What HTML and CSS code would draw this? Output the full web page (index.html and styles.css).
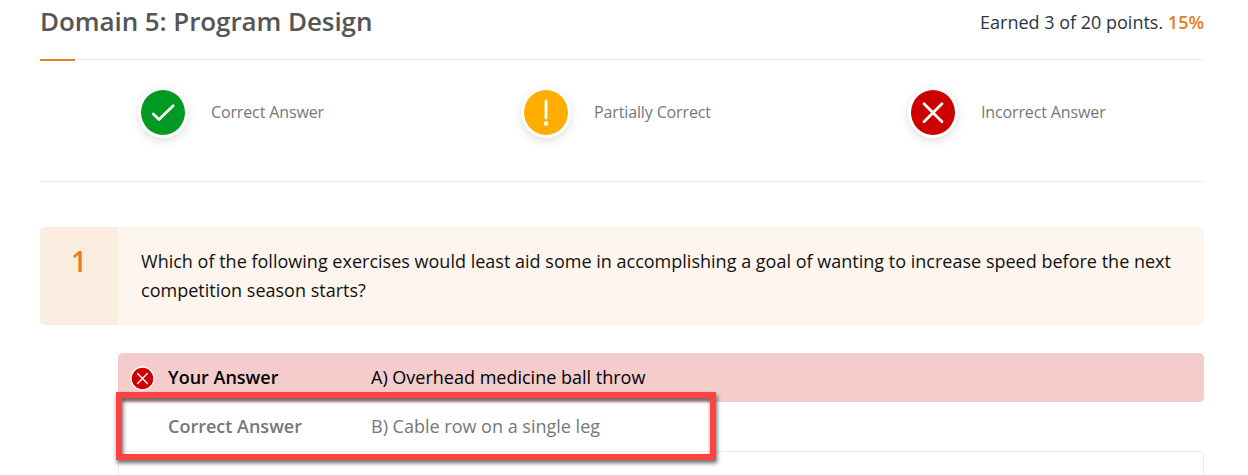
FILE: index.html
```html
<!DOCTYPE html>
<html lang="en">
<head>
<meta charset="utf-8">
<title>Domain 5: Program Design</title>
<link rel="stylesheet" href="styles.css">
</head>
<body>
<main class="page">
  <header class="head">
    <h1 class="title">Domain 5: Program Design</h1>
    <p class="score">Earned 3 of 20 points. <strong class="percent">15%</strong></p>
  </header>
  <section class="legend">
    <div class="legend-item">
      <span class="badge correct"><svg viewBox="0 0 44 44"><path d="M12.3 23.5L18 29.1L32.2 15.3"/></svg></span>
      <span class="label-correct">Correct Answer</span>
    </div>
    <div class="legend-item">
      <span class="badge partial"><svg viewBox="0 0 44 44"><path d="M22 10.3V27.6" /><circle cx="22" cy="33" r="2.3"/></svg></span>
      <span class="label-partial">Partially Correct</span>
    </div>
    <div class="legend-item">
      <span class="badge incorrect"><svg viewBox="0 0 44 44"><path d="M13 13.3L31 31.3M31 13.3L13 31.3"/></svg></span>
      <span class="label-incorrect">Incorrect Answer</span>
    </div>
  </section>
  <section class="question">
    <div class="number">1</div>
    <p class="prompt">Which of the following exercises would least aid some in accomplishing a goal of wanting to increase speed before the next competition season starts?</p>
  </section>
  <section class="answers">
    <div class="answer yours">
      <span class="mark"><svg viewBox="0 0 24 24"><circle class="disc" cx="12" cy="12" r="11"/><path d="M7.3 7.3L16.7 16.7M16.7 7.3L7.3 16.7"/></svg></span>
      <strong class="who your-label">Your Answer</strong>
      <span class="your-text">A) Overhead medicine ball throw</span>
    </div>
    <div class="answer right">
      <span class="mark"></span>
      <strong class="who right-label">Correct Answer</strong>
      <span class="right-text">B) Cable row on a single leg</span>
    </div>
    <div class="details"></div>
    <div class="highlight"></div>
  </section>
</main>
</body>
</html>
```
FILE: styles.css
```css
* { box-sizing: border-box; }
body { margin: 0; background: #fff; overflow: hidden; font-family: "Open Sans", "Noto Sans", sans-serif; }
h1, p { margin: 0; }
.page { width: 1164px; height: 475px; margin-left: 40px; overflow: visible; }
.head { position: relative; height: 60px; display: flex; justify-content: space-between; border-bottom: 1px solid #ebebeb; }
.head::after { content: ""; position: absolute; left: 0; bottom: -2px; width: 35px; height: 2px; background: #e67e22; }
.title { font-size: 26px; line-height: 36px; padding-top: 3px; font-weight: 600; letter-spacing: -0.08px; color: #555; white-space: nowrap; }
.score { font-size: 18px; line-height: 28px; padding-top: 8px; color: #2e3440; white-space: nowrap; }
.percent { font-weight: 600; color: #e67e22; }
.legend { height: 122px; padding-top: 27px; display: grid; grid-template-columns: 383px 387px 1fr; padding-left: 98px; border-bottom: 1px solid #ebebeb; }
.legend-item { display: flex; height: 51px; gap: 23px; font-size: 16px; line-height: 51px; letter-spacing: -0.13px; color: #777; white-space: nowrap; }
.badge { flex: none; width: 50px; height: 51px; border: 3px solid #fff; border-radius: 50%; box-shadow: 0 3px 10px rgba(0,0,0,.13); }
.badge svg { display: block; width: 44px; height: 45px; fill: none; stroke: #fff; stroke-width: 2.8; stroke-linecap: round; stroke-linejoin: round; }
.badge circle { fill: #fff; stroke: none; }
.correct { background: #009a22; }
.partial { background: #ffad00; }
.incorrect { background: #c00; }
.question { display: flex; height: 98px; margin-top: 45px; border-radius: 5px; overflow: hidden; background: #fef5ee; }
.number { width: 78px; background: #fbece0; color: #e67e22; font-size: 28px; line-height: 36px; font-weight: 600; text-align: center; padding-top: 16px; }
.prompt { flex: 1; padding: 20px 23px 0; font-size: 18px; line-height: 29px; letter-spacing: 0.01px; color: #111; }
.answers { position: relative; margin: 28px 0 0 78px; }
.answer { display: flex; align-items: center; height: 49px; padding-left: 12px; font-size: 18px; line-height: 24px; white-space: nowrap; }
.answer strong, .answer strong + span { padding-bottom: 2px; }
.yours { background: #f4cccc; border-radius: 5px; color: #000; }
.right { color: #777; }
.mark { flex: none; width: 24px; height: 24px; margin-right: 14px; }
.mark svg { display: block; width: 25px; height: 25px; stroke: #fff; stroke-width: 1.35; stroke-linecap: round; }
.disc { fill: #c00; }
.who { width: 203px; font-weight: 600; }
.details { height: 40px; border: 1px solid #ebebeb; border-radius: 5px; }
.highlight { position: absolute; left: -2px; top: 39px; width: 600px; height: 68px; border: 6px solid #ff4242; filter: drop-shadow(1px 3px 2px rgba(0,0,0,.6)); }
```
